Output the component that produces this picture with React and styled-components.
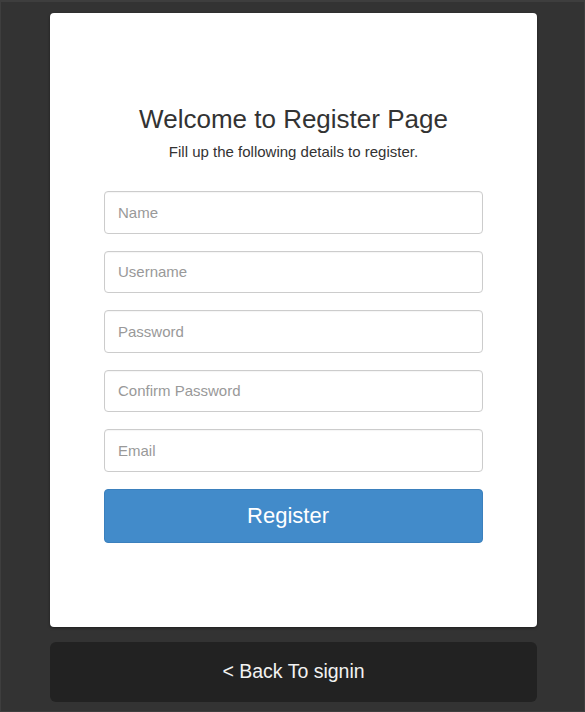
import styled, { createGlobalStyle } from 'styled-components';

const GlobalStyle = createGlobalStyle`
  html, body {
    margin: 0;
    padding: 0;
    background: #333333;
  }
  * {
    box-sizing: border-box;
  }
`;

const fields = ['Name', 'Username', 'Password', 'Confirm Password', 'Email'];

export default function App() {
  return (
    <>
      <GlobalStyle />
      <Page>
        <Card>
          <Title>Welcome to Register Page</Title>
          <Subtitle>Fill up the following details to register.</Subtitle>
          <Form onSubmit={(e) => e.preventDefault()}>
            {fields.map((f) => (
              <Input
                key={f}
                placeholder={f}
                type={f.includes('Password') ? 'password' : 'text'}
              />
            ))}
            <RegisterButton type="submit">Register</RegisterButton>
          </Form>
        </Card>
        <BackBar>&lt; Back To signin</BackBar>
      </Page>
    </>
  );
}

const Page = styled.div`
  min-height: 712px;
  width: 585px;
  border: 1px solid #3e3e3e;
  border-top-width: 2px;
  padding: 11px 0 0 49px;
  font-family: "Liberation Sans", Arial, sans-serif;
`;

const Card = styled.div`
  width: 487px;
  background: #ffffff;
  border-radius: 4px;
  box-shadow: 0 1px 3px rgba(0, 0, 0, 0.45);
  padding: 91px 54px 84px;
  text-align: center;
`;

const Title = styled.h3`
  margin: 0;
  font-size: 26px;
  line-height: 30px;
  font-weight: 400;
  color: #333333;
`;

const Subtitle = styled.p`
  margin: 8px 0 0;
  font-size: 15px;
  line-height: 20px;
  color: #333333;
`;

const Form = styled.form`
  display: flex;
  flex-direction: column;
  gap: 16.75px;
  margin-top: 29px;
`;

const Input = styled.input`
  height: 42.75px;
  width: 100%;
  border: 1px solid #cccccc;
  border-radius: 4px;
  padding: 0 13px;
  font-family: inherit;
  font-size: 15px;
  color: #555555;
  outline: none;
  box-shadow: inset 0 1px 1px rgba(0, 0, 0, 0.04);
  &::placeholder {
    color: #999999;
  }
`;

const RegisterButton = styled.button`
  height: 54px;
  width: 100%;
  border: 1px solid #3b80bd;
  border-radius: 4px;
  padding: 0 11px 0 0;
  background: #428bca;
  color: #ffffff;
  font-family: inherit;
  font-size: 22px;
  cursor: pointer;
`;

const BackBar = styled.div`
  width: 487px;
  height: 60px;
  margin-top: 15px;
  border-radius: 6px;
  background: #222222;
  color: #f2f2f2;
  font-size: 19.5px;
  display: flex;
  align-items: center;
  justify-content: center;
  cursor: pointer;
`;
